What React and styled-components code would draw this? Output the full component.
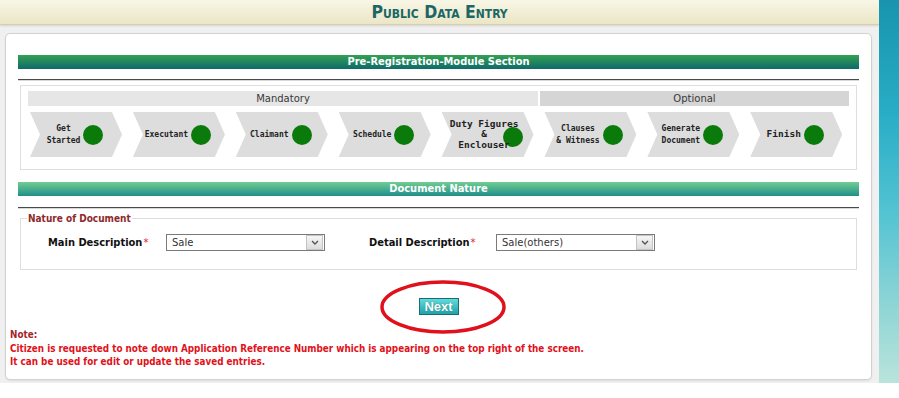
import React from 'react';
import styled, { createGlobalStyle } from 'styled-components';

const GlobalStyle = createGlobalStyle`
  html, body {
    margin: 0;
    padding: 0;
    background: #ffffff;
  }
  body {
    font-family: "Liberation Sans", Arial, sans-serif;
  }
`;

const STEPS = [
  { label: ['Get', 'Started'] },
  { label: ['Executant'] },
  { label: ['Claimant'] },
  { label: ['Schedule'] },
  { label: ['Duty Figures', '&', 'Enclouser'], size: 9.5, overlap: true },
  { label: ['Clauses', '& Witness'] },
  { label: ['Generate', 'Document'] },
  { label: ['Finish'], size: 9.5 },
];

const Page = styled.div`
  display: flex;
  height: 383px;
`;

const Main = styled.div`
  width: 879px;
  display: flex;
  flex-direction: column;
  background: #f0f0f0;
`;

const SideStrip = styled.div`
  flex: 1;
  background: linear-gradient(#1894ae 0%, #29adc6 30%, #52c3d2 55%, #8fd5d6 80%, #b9e4db 100%);
`;

const Header = styled.header`
  height: 24px;
  border-bottom: 1px solid #d5cfae;
  background: linear-gradient(#f8f6e6, #ebe6c6);
  box-shadow: 0 1px 2px rgba(0, 0, 0, 0.12);
  display: flex;
  align-items: center;
  justify-content: center;
`;

const Title = styled.h1`
  margin: 0;
  font-family: "DejaVu Sans Condensed", "Liberation Sans Narrow", "Liberation Sans", sans-serif;
  font-weight: bold;
  font-size: 17.5px;
  font-variant: small-caps;
  color: #1b6666;
`;

const Body = styled.div`
  flex: 1;
  padding: 8px 7px 3px 5px;
  display: flex;
`;

const Card = styled.div`
  flex: 1;
  background: #fff;
  border: 1px solid #d2d2d2;
  border-radius: 5px;
  box-shadow: 0 1px 2px rgba(0, 0, 0, 0.08);
  padding-top: 21px;
  display: flex;
  flex-direction: column;
`;

const Section = styled.div`
  margin: 0 12px;
  display: flex;
  flex-direction: column;
`;

const SectionBar = styled.div`
  height: 14px;
  line-height: 14px;
  margin-top: ${p => p.$top || 0}px;
  background: ${p => p.$light
    ? 'linear-gradient(#72cd92, #1f8f8a)'
    : 'linear-gradient(#34a152, #0e6a6c)'};
  color: #fff;
  font-family: "DejaVu Sans Condensed", "Liberation Sans", sans-serif;
  font-size: 11px;
  font-weight: bold;
  text-align: center;
`;

const Rule = styled.div`
  height: 1px;
  background: #4a4a4a;
  border-bottom: 1px solid #d8d8d8;
  margin-top: ${p => p.$top}px;
`;

const StepsBox = styled.div`
  margin: 4px 2px 0;
  border: 1px solid #dedede;
  padding: 5px 7px 12px;
`;

const PhaseRow = styled.div`
  display: flex;
  gap: 2px;
`;

const Phase = styled.div`
  height: 15px;
  line-height: 15px;
  ${p => (p.$width ? `width: ${p.$width}px;` : 'flex: 1;')}
  background: ${p => (p.$optional ? '#d5d5d5' : '#e6e6e6')};
  color: #383838;
  font-family: "DejaVu Sans", sans-serif;
  font-size: 10px;
  text-align: center;
`;

const StepRow = styled.div`
  display: flex;
  gap: 10.9px;
  margin-top: 6px;
  padding-left: 2px;
`;

const Step = styled.div`
  width: 92px;
  height: 45px;
  flex: none;
  background: #dddddd;
  clip-path: polygon(0 0, 82px 0, 92px 50%, 82px 100%, 0 100%, 10px 50%);
  display: flex;
  align-items: center;
  justify-content: center;
  padding: 0 12px 0 10px;
  box-sizing: border-box;
  gap: 3px;
`;

const StepText = styled.div`
  font-family: "DejaVu Sans Mono", "Liberation Mono", monospace;
  font-weight: bold;
  font-size: ${p => p.$size || 8}px;
  line-height: ${p => (p.$size ? 10.5 : 11.5)}px;
  color: #222;
  text-align: center;
  white-space: nowrap;
  position: relative;
  z-index: 1;
`;

const Dot = styled.span`
  width: 20px;
  height: 20px;
  flex: none;
  border-radius: 50%;
  background: #0a7b0a;
  margin-left: ${p => (p.$overlap ? -18 : 0)}px;
  margin-top: ${p => (p.$overlap ? 4 : 0)}px;
`;

const Fieldset = styled.fieldset`
  margin: 4px 2px 0;
  border: 1px solid #dedede;
  padding: 10px 0 18px 6px;
`;

const Legend = styled.legend`
  padding: 0 1px;
  color: #8e2a2a;
  font-size: 10px;
  font-weight: bold;
  font-family: "DejaVu Sans Condensed", "Liberation Sans", sans-serif;
`;

const FieldRow = styled.div`
  display: flex;
  align-items: center;
  padding-left: 21px;
`;

const Label = styled.label`
  width: ${p => p.$width}px;
  margin-left: ${p => p.$gap || 0}px;
  font-size: 11px;
  font-weight: bold;
  color: #111;
  font-family: "DejaVu Sans Condensed", "Liberation Sans", sans-serif;
`;

const Required = styled.span`
  color: #e0141c;
  font-weight: normal;
  margin-left: 1px;
`;

const Select = styled.div`
  width: 159px;
  height: 17px;
  box-sizing: border-box;
  border: 1px solid #7a7a7a;
  display: flex;
  align-items: center;
  font-family: "DejaVu Sans", sans-serif;
  font-size: 10px;
  color: #333;
`;

const SelectValue = styled.span`
  flex: 1;
  padding-left: 5px;
`;

const SelectArrow = styled.span`
  width: 15px;
  height: 13px;
  margin-right: 1px;
  border: 1px solid #c4c4c4;
  background: linear-gradient(#f6f6f6, #dcdcdc);
  display: flex;
  align-items: center;
  justify-content: center;
`;

const Actions = styled.div`
  display: flex;
  justify-content: center;
  margin-top: 28px;
`;

const NextWrap = styled.span`
  position: relative;
  display: inline-flex;
`;

const Ring = styled.svg`
  position: absolute;
  left: -42px;
  top: -18px;
  pointer-events: none;
`;

const NextButton = styled.button`
  width: 40px;
  height: 17px;
  padding: 0;
  border: 1px solid #1a6c70;
  background: linear-gradient(#62dada, #1fa2aa);
  color: #fff;
  font-family: "Liberation Sans", Arial, sans-serif;
  font-weight: bold;
  font-size: 13px;
  line-height: 15px;
  text-shadow: 0 0 1px rgba(0, 60, 60, 0.6);
`;

const Note = styled.div`
  margin: 13px 0 0 4px;
  font-family: "DejaVu Sans Condensed", "Liberation Sans", sans-serif;
  font-size: 9.8px;
  font-weight: bold;
  line-height: 13.5px;
  color: #e0121a;
`;

const NoteTitle = styled.div`
  color: #a3262a;
`;

function Chevron() {
  return (
    <svg width="8" height="6" viewBox="0 0 8 6">
      <path d="M1 1 L4 4 L7 1" fill="none" stroke="#555" strokeWidth="1.4" />
    </svg>
  );
}

export default function App() {
  return (
    <>
      <GlobalStyle />
      <Page>
        <Main>
          <Header>
            <Title>Public Data Entry</Title>
          </Header>
          <Body>
            <Card>
              <Section>
                <SectionBar>Pre-Registration-Module Section</SectionBar>
                <Rule $top={10} />
                <StepsBox>
                  <PhaseRow>
                    <Phase $width={510}>Mandatory</Phase>
                    <Phase $optional>Optional</Phase>
                  </PhaseRow>
                  <StepRow>
                    {STEPS.map((s, i) => (
                      <Step key={i}>
                        <StepText $size={s.size}>
                          {s.label.map((l, j) => <div key={j}>{l}</div>)}
                        </StepText>
                        <Dot $overlap={s.overlap} />
                      </Step>
                    ))}
                  </StepRow>
                </StepsBox>

                <SectionBar $light $top={12}>Document Nature</SectionBar>
                <Rule $top={11} />
                <Fieldset>
                  <Legend>Nature of Document</Legend>
                  <FieldRow>
                    <Label $width={118}>Main Description<Required>*</Required></Label>
                    <Select>
                      <SelectValue>Sale</SelectValue>
                      <SelectArrow><Chevron /></SelectArrow>
                    </Select>
                    <Label $width={127} $gap={44}>Detail Description<Required>*</Required></Label>
                    <Select>
                      <SelectValue>Sale(others)</SelectValue>
                      <SelectArrow><Chevron /></SelectArrow>
                    </Select>
                  </FieldRow>
                </Fieldset>

                <Actions>
                  <NextWrap>
                    <NextButton>Next</NextButton>
                    <Ring width="132" height="56" viewBox="0 0 132 56">
                      <ellipse cx="66" cy="27" rx="61" ry="25" fill="none" stroke="#e0101c" strokeWidth="3.5" />
                    </Ring>
                  </NextWrap>
                </Actions>
              </Section>

              <Note>
                <NoteTitle>Note:</NoteTitle>
                <div>Citizen is requested to note down Application Reference Number which is appearing on the top right of the screen.</div>
                <div>It can be used for edit or update the saved entries.</div>
              </Note>
            </Card>
          </Body>
        </Main>
        <SideStrip />
      </Page>
    </>
  );
}
